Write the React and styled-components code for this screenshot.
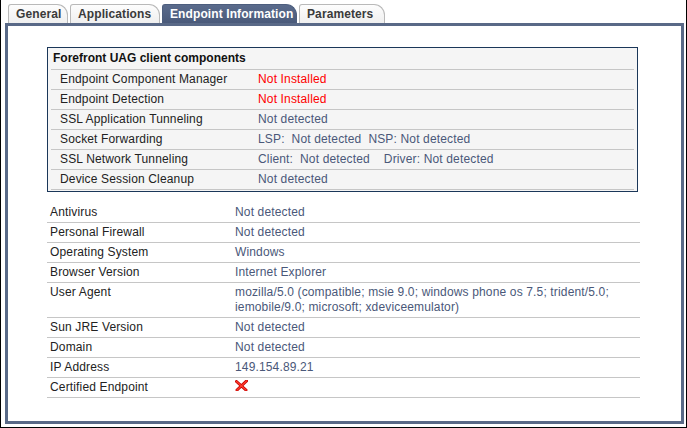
import styled, { createGlobalStyle } from 'styled-components';

const GlobalStyle = createGlobalStyle`
  html, body {
    margin: 0;
    padding: 0;
    background: #fff;
  }
  body {
    font-family: "Liberation Sans", Arial, sans-serif;
    font-size: 12px;
    letter-spacing: 0.15px;
    color: #222;
  }
`;

const Frame = styled.div`
  width: 687px;
  height: 428px;
  box-sizing: border-box;
  border: 1px solid #000;
  border-top: none;
  padding: 4px 2px 3px 4px;
  display: flex;
  flex-direction: column;
  background: #fff;
`;

const TabStrip = styled.div`
  display: flex;
  align-items: flex-end;
  gap: 2px;
  padding-left: 3px;
  height: 19px;
`;

const Tab = styled.div`
  width: ${p => p.$width}px;
  height: 19px;
  box-sizing: border-box;
  padding-left: 7px;
  display: flex;
  align-items: center;
  font-weight: bold;
  font-size: 12px;
  letter-spacing: 0.1px;
  border: 1px solid ${p => (p.$active ? '#4d5e7e' : '#b9b9b9')};
  border-bottom: none;
  border-radius: 3px 11px 0 0;
  color: ${p => (p.$active ? '#fff' : '#3a3a3a')};
  background: ${p =>
    p.$active
      ? 'linear-gradient(#5a6b8c, #4a5a7a)'
      : 'linear-gradient(#fdfdfd, #efefef)'};
`;

const Panel = styled.div`
  flex: 1;
  border: 3px solid #596987;
  padding: 21px 0 0 39px;
  display: flex;
  flex-direction: column;
`;

const ClientBox = styled.div`
  width: 591px;
  box-sizing: border-box;
  border: 1px solid #1b3759;
  background: #f5f5f5;
  padding: 0 3px 1px;
`;

const BoxTitle = styled.div`
  padding: 3px 2px 3px;
  line-height: 15px;
  font-weight: bold;
  letter-spacing: 0;
  color: #111;
  border-bottom: 1px solid #c6c6c6;
`;

const ClientRow = styled.div`
  display: grid;
  grid-template-columns: 198px 1fr;
  padding: 2px 0 2px 9px;
  line-height: 15px;
  border-bottom: 1px solid #c6c6c6;
`;

const Label = styled.span`
  color: #222;
`;

const Value = styled.span`
  color: ${p => (p.$error ? '#ff0000' : '#4a5879')};
  white-space: ${p => (p.$pre ? 'pre' : 'normal')};
`;

const InfoTable = styled.div`
  width: 593px;
  margin-top: 11px;
`;

const InfoRow = styled.div`
  display: grid;
  grid-template-columns: 185px 1fr;
  padding: 2px 0 2px 3px;
  line-height: 15px;
  border-bottom: 1px solid #c6c6c6;
`;

const CrossIcon = () => (
  <svg width="13" height="11" viewBox="0 0 13 11" style={{ display: 'block' }}>
    <path d="M1.5 1.5 L11 10 M11.5 1 L2 10" stroke="#c40000" strokeWidth="3" strokeLinecap="round" />
    <path d="M1.5 1.5 L11 10 M11.5 1 L2 10" stroke="#ff3a2a" strokeWidth="1.4" strokeLinecap="round" />
  </svg>
);

const clientRows = [
  { label: 'Endpoint Component Manager', value: 'Not Installed', error: true },
  { label: 'Endpoint Detection', value: 'Not Installed', error: true },
  { label: 'SSL Application Tunneling', value: 'Not detected' },
  { label: 'Socket Forwarding', value: 'LSP:  Not detected  NSP: Not detected', pre: true },
  { label: 'SSL Network Tunneling', value: 'Client:  Not detected    Driver: Not detected', pre: true },
  { label: 'Device Session Cleanup', value: 'Not detected' },
];

const infoRows = [
  { label: 'Antivirus', value: 'Not detected' },
  { label: 'Personal Firewall', value: 'Not detected' },
  { label: 'Operating System', value: 'Windows' },
  { label: 'Browser Version', value: 'Internet Explorer' },
  {
    label: 'User Agent',
    value:
      'mozilla/5.0 (compatible; msie 9.0; windows phone os 7.5; trident/5.0; iemobile/9.0; microsoft; xdeviceemulator)',
  },
  { label: 'Sun JRE Version', value: 'Not detected' },
  { label: 'Domain', value: 'Not detected' },
  { label: 'IP Address', value: '149.154.89.21' },
];

const tabs = [
  { name: 'General', width: 60 },
  { name: 'Applications', width: 90 },
  { name: 'Endpoint Information', active: true, width: 135 },
  { name: 'Parameters', width: 86 },
];

export default function App() {
  return (
    <>
      <GlobalStyle />
      <Frame>
        <TabStrip>
          {tabs.map(t => (
            <Tab key={t.name} $active={t.active} $width={t.width}>
              {t.name}
            </Tab>
          ))}
        </TabStrip>
        <Panel>
          <ClientBox>
            <BoxTitle>Forefront UAG client components</BoxTitle>
            {clientRows.map(r => (
              <ClientRow key={r.label}>
                <Label>{r.label}</Label>
                <Value $error={r.error} $pre={r.pre}>
                  {r.value}
                </Value>
              </ClientRow>
            ))}
          </ClientBox>
          <InfoTable>
            {infoRows.map(r => (
              <InfoRow key={r.label}>
                <Label>{r.label}</Label>
                <Value>{r.value}</Value>
              </InfoRow>
            ))}
            <InfoRow>
              <Label>Certified Endpoint</Label>
              <CrossIcon />
            </InfoRow>
          </InfoTable>
        </Panel>
      </Frame>
    </>
  );
}
